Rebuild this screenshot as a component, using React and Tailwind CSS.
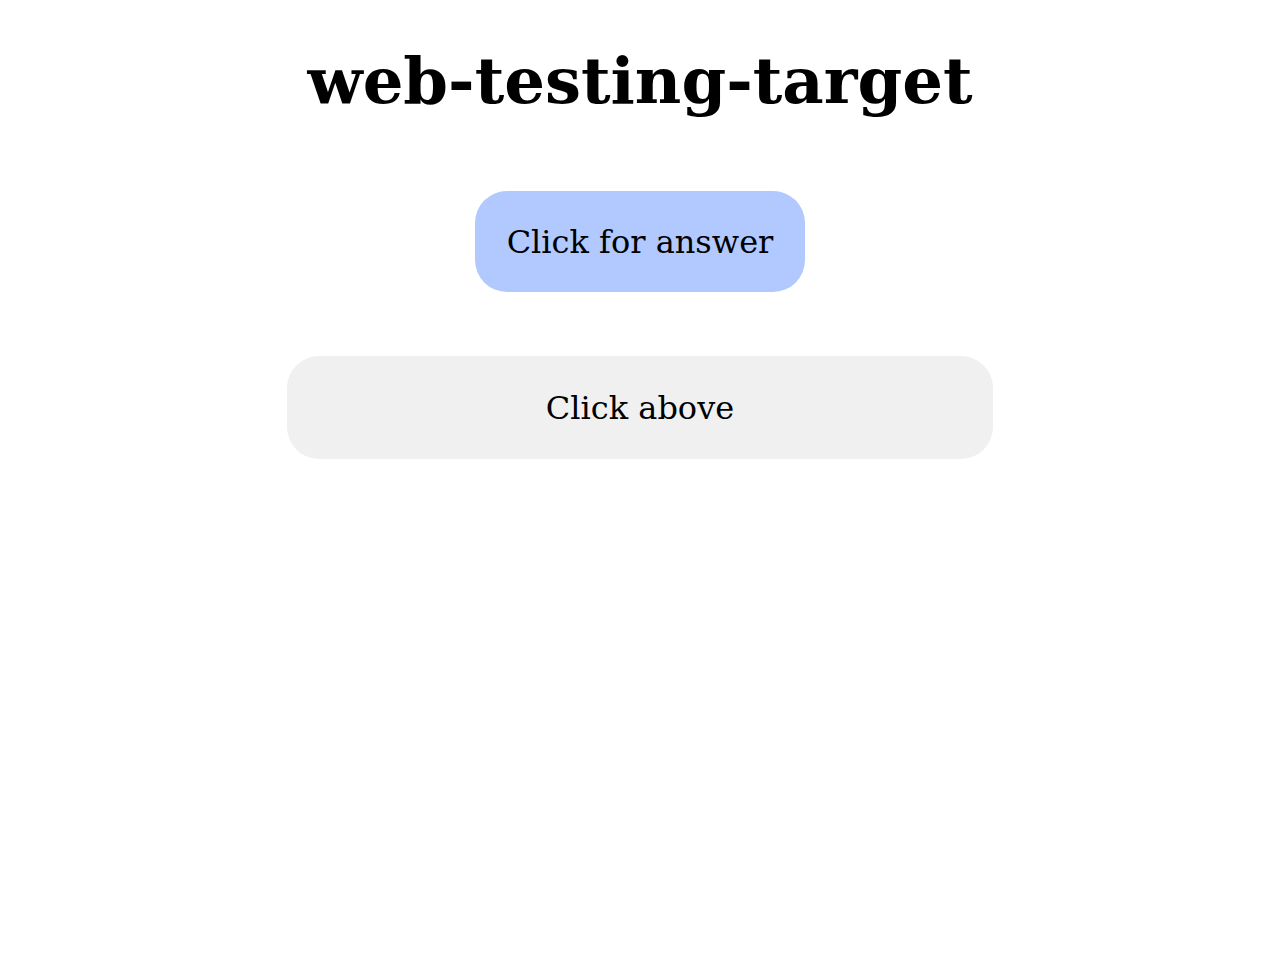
export default function App() {
  return (
    <div className="flex flex-col items-center bg-white text-black min-h-[955px]" style={{ fontFamily: '"DejaVu Serif", serif' }}>
      <h1 className="mt-[43px] text-[64px] font-bold leading-[75px]">web-testing-target</h1>
      <button className="mt-[73px] h-[101px] px-[32px] rounded-[32px] bg-[#b1c9fe] text-[32px] leading-none text-black">
        Click for answer
      </button>
      <div className="mt-[64px] w-[706px] h-[103px] rounded-[32px] bg-[#f0f0f0] flex items-center justify-center text-[32px]">
        Click above
      </div>
    </div>
  );
}
